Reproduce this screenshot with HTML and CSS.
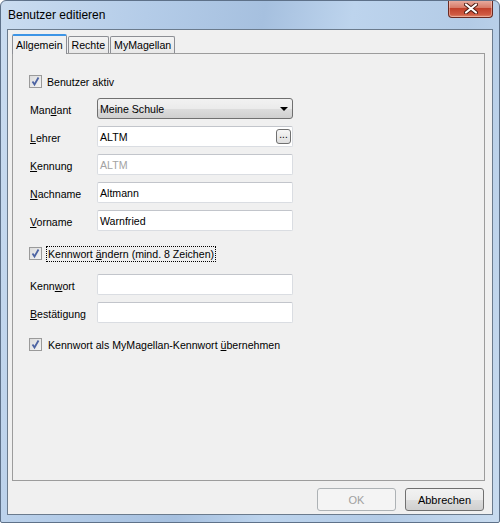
FILE: index.html
```html
<!DOCTYPE html>
<html lang="de">
<head>
    <meta charset="UTF-8">
    <title>Benutzer editieren</title>
    <link rel="stylesheet" href="styles.css">
</head>
<body>
    <div class="window">
        <div class="titlebar">
            <span class="title">Benutzer editieren</span>
            <div class="close">
                <svg width="14" height="11" viewBox="0 0 14 11">
                    <path d="M2 1.5 L12 9.5 M12 1.5 L2 9.5" stroke="#4a1a12" stroke-width="4" stroke-linecap="round"/>
                    <path d="M2 1.5 L12 9.5 M12 1.5 L2 9.5" stroke="#ffffff" stroke-width="2.2" stroke-linecap="round"/>
                </svg>
            </div>
        </div>
        <div class="client">
            <div class="tabs">
                <div class="tab active">Allgemein</div>
                <div class="tab">Rechte</div>
                <div class="tab">MyMagellan</div>
            </div>
            <div class="panel">
                <div class="check first">
                    <span class="box"><svg width="11" height="11" viewBox="0 0 11 11"><path d="M2.5 5.5 L4.5 8.5 L8.5 1.5" fill="none" stroke="#4d64a3" stroke-width="1.8"/></svg></span>
                    <span class="check-text">Benutzer aktiv</span>
                </div>

                <div class="form">
                    <span class="label">Man<u>d</u>ant</span>
                    <div class="select">
                        <span>Meine Schule</span>
                        <span class="arrow"></span>
                    </div>

                    <span class="label"><u>L</u>ehrer</span>
                    <div class="textbox">
                        <span>ALTM</span>
                        <span class="dots">...</span>
                    </div>

                    <span class="label"><u>K</u>ennung</span>
                    <div class="textbox disabled"><span>ALTM</span></div>

                    <span class="label"><u>N</u>achname</span>
                    <div class="textbox"><span>Altmann</span></div>

                    <span class="label"><u>V</u>orname</span>
                    <div class="textbox"><span>Warnfried</span></div>
                </div>

                <div class="check second">
                    <span class="box"><svg width="11" height="11" viewBox="0 0 11 11"><path d="M2.5 5.5 L4.5 8.5 L8.5 1.5" fill="none" stroke="#4d64a3" stroke-width="1.8"/></svg></span>
                    <span class="check-text focus">Kennwort <u>ä</u>ndern (mind. 8 Zeichen)</span>
                </div>

                <div class="form pw">
                    <span class="label">Kenn<u>w</u>ort</span>
                    <div class="textbox"></div>

                    <span class="label"><u>B</u>estätigung</span>
                    <div class="textbox"></div>
                </div>

                <div class="check third">
                    <span class="box"><svg width="11" height="11" viewBox="0 0 11 11"><path d="M2.5 5.5 L4.5 8.5 L8.5 1.5" fill="none" stroke="#4d64a3" stroke-width="1.8"/></svg></span>
                    <span class="check-text">Kennwort als MyMagellan-Kennwort <u>ü</u>bernehmen</span>
                </div>
            </div>
            <div class="footer">
                <button class="btn" disabled>OK</button>
                <button class="btn">Abbrechen</button>
            </div>
        </div>
    </div>
</body>
</html>
```

FILE: styles.css
```css
body {
    margin: 0;
    background-color: #ffffff;
    font-family: "Liberation Sans", Arial, sans-serif;
    font-size: 10.6px;
    color: #000000;
}

.window {
    width: 500px;
    height: 523px;
    box-sizing: border-box;
    border: 1px solid #5e7189;
    border-radius: 6px 6px 2px 2px;
    background: linear-gradient(100deg, #cadcf0 0%, #b4cce8 25%, #a6c0df 45%, #bdd4ed 60%, #b3cbe6 80%, #c8dbef 100%);
    display: flex;
    flex-direction: column;
    overflow: hidden;
}

.titlebar {
    height: 28px;
    display: flex;
    justify-content: space-between;
    align-items: flex-start;
    padding-left: 7px;
}

.title {
    font-size: 12px;
    line-height: 12px;
    margin-top: 8px;
}

.close {
    width: 45px;
    height: 18px;
    margin-right: 6px;
    margin-top: -1px;
    box-sizing: border-box;
    border: 1px solid #6a2a22;
    border-top: none;
    border-radius: 0 0 4px 4px;
    background: linear-gradient(to bottom, #eab0a4 0%, #d77b68 45%, #c1412b 50%, #cf5a42 85%, #e08a6d 100%);
    display: flex;
    align-items: center;
    justify-content: center;
    box-shadow: inset 0 0 0 1px rgba(255, 220, 210, 0.45);
}

.client {
    flex: 1;
    margin: 0 6px 7px 6px;
    border: 1px solid #6b7b8d;
    background-color: #f0f0f0;
    display: flex;
    flex-direction: column;
}

.tabs {
    display: flex;
    gap: 1px;
    margin: 4px 0 0 4px;
    height: 19px;
    position: relative;
    z-index: 1;
}

.tab {
    box-sizing: border-box;
    height: 17px;
    margin-top: 2px;
    padding: 0 3px;
    border: 1px solid #8c8e94;
    border-bottom: none;
    border-radius: 2px 2px 0 0;
    background: linear-gradient(to bottom, #f3f3f3, #e8e8e8);
    line-height: 16px;
}

.tab.active {
    height: 20px;
    margin-top: 0;
    padding: 0 3px;
    border-top: 2px solid #3d95e6;
    background: #f0f0f0;
    line-height: 19px;
}

.panel {
    height: 428px;
    box-sizing: border-box;
    margin: 0 7px 0 4px;
    border: 1px solid #9c9c9c;
    padding: 21px 0 0 16px;
}

.check {
    display: flex;
    align-items: center;
    height: 13px;
}

.box {
    width: 13px;
    height: 13px;
    box-sizing: border-box;
    border: 1px solid #9a9a9a;
    background: linear-gradient(135deg, #dcdcdc, #f4f4f4);
    display: flex;
    align-items: center;
    justify-content: center;
    flex-shrink: 0;
}

.check-text {
    margin-left: 3px;
    padding: 1px 1px;
    border: 1px solid transparent;
}

.check.second,
.check.third {
    margin-top: 16px;
}

.check.second .check-text,
.check.third .check-text {
    margin-left: 4px;
}

.check.third {
    margin-top: 15px;
}

.check-text.focus {
    border: 1px dotted #000000;
}

.form {
    display: grid;
    grid-template-columns: 68px 196px;
    grid-auto-rows: 21px;
    row-gap: 7px;
    align-items: center;
    margin-top: 10px;
}

.form.pw {
    margin-top: 14px;
}

.label {
    padding-left: 1px;
    padding-top: 2px;
}

.textbox {
    height: 21px;
    box-sizing: border-box;
    border: 1px solid #dadde2;
    border-top-color: #c2c5cb;
    border-radius: 2px;
    background-color: #ffffff;
    display: flex;
    align-items: center;
    justify-content: space-between;
    padding: 0 1px 0 2px;
}

.textbox.disabled {
    color: #a3a3a3;
    background-color: #ffffff;
}

.dots {
    width: 15px;
    height: 15px;
    box-sizing: border-box;
    border: 1px solid #707070;
    border-radius: 3px;
    background: linear-gradient(to bottom, #f6f6f6, #dedede);
    font-size: 10px;
    line-height: 10px;
    text-align: center;
}

.select {
    height: 21px;
    box-sizing: border-box;
    border: 1px solid #707070;
    border-radius: 3px;
    background: linear-gradient(to bottom, #f2f2f2 0%, #ebebeb 50%, #dddddd 51%, #cfcfcf 100%);
    display: flex;
    align-items: center;
    justify-content: space-between;
    padding: 0 4px 0 2px;
}

.arrow {
    width: 0;
    height: 0;
    border-left: 4px solid transparent;
    border-right: 4px solid transparent;
    border-top: 4px solid #000000;
}

.footer {
    display: flex;
    justify-content: flex-end;
    gap: 9px;
    padding: 7px 8px 0 0;
}

.btn {
    width: 79px;
    height: 23px;
    border: 1px solid #707070;
    border-radius: 3px;
    background: linear-gradient(to bottom, #f2f2f2 0%, #ebebeb 50%, #dddddd 51%, #cfcfcf 100%);
    font-family: "Liberation Sans", Arial, sans-serif;
    font-size: 11px;
    color: #000000;
    padding: 0;
}

.btn:disabled {
    border-color: #adb2b5;
    background: #f4f4f4;
    color: #a0a0a0;
}
```
